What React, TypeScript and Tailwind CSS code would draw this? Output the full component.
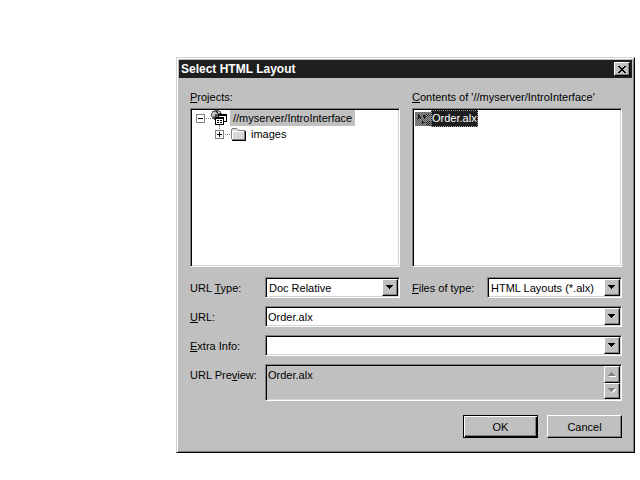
import type { ReactNode } from "react";

const sunken =
  "border border-t-[#808080] border-l-[#808080] border-r-white border-b-white shadow-[inset_1px_1px_0_#000,inset_-1px_-1px_0_#d4d4d4] p-px";
const raised =
  "border border-t-white border-l-white border-r-black border-b-black bg-[#c0c0c0] shadow-[inset_-1px_-1px_0_#808080]";

function Arrow({ up = false, disabled = false }: { up?: boolean; disabled?: boolean }) {
  const d = up ? "M3 0h1v1h1v1h1v1h1v1H0V3h1V2h1V1h1z" : "M0 0h7v1H6v1H5v1H4v1H3V3H2V2H1V1H0z";
  return (
    <svg width="8" height="5" viewBox="0 0 8 5" shapeRendering="crispEdges" aria-hidden="true">
      {disabled && <path d={d} fill="#fff" transform="translate(1 1)" />}
      <path d={d} fill={disabled ? "#808080" : "#000"} />
    </svg>
  );
}

function DropDown({ id, value }: { id: string; value: string }) {
  return (
    <div className={`relative flex h-[21px] min-w-0 flex-1 bg-white ${sunken}`}>
      <select id={id} className="w-full appearance-none bg-transparent pr-4 pl-0.5 outline-none">
        <option>{value}</option>
      </select>
      <span className={`pointer-events-none absolute inset-y-px right-px flex w-4 items-center justify-center ${raised}`}>
        <Arrow />
      </span>
    </div>
  );
}

function Combo({ id, value }: { id: string; value: string }) {
  return (
    <div className={`flex h-[21px] min-w-0 flex-1 bg-white ${sunken}`}>
      <input id={id} defaultValue={value} className="min-w-0 flex-1 bg-transparent pl-px outline-none" />
      <button type="button" aria-label="Show list" className={`flex w-4 items-center justify-center ${raised}`}>
        <Arrow />
      </button>
    </div>
  );
}

function Field({ id, label, children }: { id: string; label: ReactNode; children: ReactNode }) {
  return (
    <div className="flex items-start">
      <label htmlFor={id} className="w-[75px] shrink-0 pt-1">
        {label}
      </label>
      {children}
    </div>
  );
}

function ExpandBox({ open }: { open: boolean }) {
  return (
    <g>
      <rect x="4.5" y="4.5" width="8" height="8" fill="#fff" stroke="#808080" />
      <path d="M6 8h5v1H6z" />
      {!open && <path d="M8 6h1v5H8z" />}
      <path d="M14 8.5h6" stroke="#808080" strokeDasharray="1 1" />
    </g>
  );
}

function ServerIcon() {
  return (
    <svg width="36" height="16" viewBox="0 0 36 16" shapeRendering="crispEdges" aria-hidden="true">
      <ExpandBox open />
      <path d="M22 0h5v1h2v2h1v5h-1v2h-7V9h-2V7h-1V3h1V1h2z" fill="#686868" />
      <path d="M21 2h3v1h1v1h-2v2h-2v1h-1V3h1zM26 1h1v1h1v1h-2z" fill="#c4c4c4" />
      <path d="M24 1h2v2h-1V2h-1zM28 3h1v2h-1zM23 5h2v1h-2zM21 8h2v1h-2z" fill="#282828" />
      <path d="M26 4h9v8h-9z" />
      <path d="M27 6h7v5h-7z" fill="#fff" />
      <path d="M23 7h9v8h-9z" />
      <path d="M24 9h7v5h-7z" fill="#fff" />
      <path d="M25 10h2v1h-2zM28 10h2v1h-2zM25 12h2v1h-2zM28 12h2v1h-2z" />
      <path d="M27.5 15v1" stroke="#808080" />
    </svg>
  );
}

function FolderIcon() {
  return (
    <svg width="36" height="16" viewBox="0 0 36 16" shapeRendering="crispEdges" aria-hidden="true">
      <path d="M8.5 0v4" stroke="#808080" strokeDasharray="1 1" />
      <ExpandBox open={false} />
      <path d="M21 2h5v1h1v1h7v10H21v-1h-1V3h1z" fill="#808080" />
      <path d="M21 3h5v1h1v1h6v8H21z" fill="#d8d8d8" />
      <path d="M21 5h12v1H22v7h-1z" fill="#fff" />
      <path d="M34 5h1v10H21v-1h13z" />
    </svg>
  );
}

function LayoutIcon() {
  return (
    <svg width="16" height="16" viewBox="0 0 16 16" shapeRendering="crispEdges" aria-hidden="true">
      <defs>
        <pattern id="dither" width="2" height="2" patternUnits="userSpaceOnUse">
          <path d="M0 0h1v1H0zM1 1h1v1H1z" fill="#202020" />
        </pattern>
      </defs>
      <path d="M0 1h16v14H0z" fill="#8c8c8c" />
      <path d="M0 1h16v14H0z" fill="url(#dither)" opacity="0.4" />
      <path d="M3 3h1v1h1v2h1v2H5V7H4v1H2V7h1zM8 4h2v1h1v2h-1v1H9V6H8zM7 10h1v1h2v1H8v1H7z" fill="#202020" />
      <path d="M11 3h4v2h-4zM11 10h5v5h-5z" fill="url(#dither)" />
    </svg>
  );
}

export default function App() {
  return (
    <main className="min-h-screen bg-white pt-[57px] pr-[5px] pl-44 font-['Liberation_Sans',Arial,sans-serif] text-[11px] leading-[14px] text-black">
      <section
        role="dialog"
        aria-labelledby="dialog-title"
        className="border border-t-[#d4d4d4] border-r-black border-b-black border-l-[#d4d4d4] bg-[#c0c0c0] p-0.5 shadow-[inset_1px_1px_0_#fff,inset_-1px_-1px_0_#808080]"
      >
        <header className="flex h-[18px] items-center justify-between bg-[#1e1e1e] pr-0.5 pl-0.5 text-white">
          <h1 id="dialog-title" className="text-[12px] font-bold">
            Select HTML Layout
          </h1>
          <button type="button" aria-label="Close" className={`flex h-3.5 w-4 items-center justify-center ${raised}`}>
            <svg width="8" height="7" viewBox="0 0 8 7" shapeRendering="crispEdges" aria-hidden="true">
              <path d="M0 0h2v1h1v1h2V1h1V0h2v1H7v1H6v1H5v1h1v1h1v1h1v1H6V6H5V5H3v1H2v1H0V6h1V5h1V4h1V3H2V2H1V1H0z" fill="#000" />
            </svg>
          </button>
        </header>

        <form className="pt-3 pr-2.5 pb-3 pl-[11px]" onSubmit={(e) => e.preventDefault()}>
          <div className="grid grid-cols-2 gap-x-3">
            <div>
              <h2 id="projects" className="mb-1">
                <u>P</u>rojects:
              </h2>
              <ul role="tree" aria-labelledby="projects" className={`h-[159px] bg-white ${sunken}`}>
                <li role="treeitem" aria-expanded="true" aria-selected="true">
                  <div className="flex h-4 items-center gap-0.5">
                    <ServerIcon />
                    <span className="bg-[#c0c0c0] px-[3px] leading-4">//myserver/IntroInterface</span>
                  </div>
                  <ul role="group" className="pl-[19px]">
                    <li role="treeitem" aria-expanded="false" aria-selected="false" className="flex h-4 items-center gap-0.5">
                      <FolderIcon />
                      <span className="px-0.5 leading-4">images</span>
                    </li>
                  </ul>
                </li>
              </ul>
            </div>
            <div>
              <h2 id="contents" className="mb-1">
                <u>C</u>ontents of '//myserver/IntroInterface'
              </h2>
              <ul role="listbox" aria-labelledby="contents" className={`h-[159px] bg-white ${sunken}`}>
                <li role="option" aria-selected="true" className="flex h-[17px] items-center pl-px">
                  <LayoutIcon />
                  <span className="border border-dotted border-[#a0a0a0] bg-[#1e1e1e] leading-[15px] text-white">Order.alx</span>
                </li>
              </ul>
            </div>
          </div>

          <div className="mt-2.5 flex flex-col gap-2">
            <div className="grid grid-cols-2 gap-x-3">
              <Field id="url-type" label={<>URL <u>T</u>ype:</>}>
                <DropDown id="url-type" value="Doc Relative" />
              </Field>
              <Field id="file-type" label={<><u>F</u>iles of type:</>}>
                <DropDown id="file-type" value="HTML Layouts (*.alx)" />
              </Field>
            </div>
            <Field id="url" label={<><u>U</u>RL:</>}>
              <Combo id="url" value="Order.alx" />
            </Field>
            <Field id="extra" label={<><u>E</u>xtra Info:</>}>
              <Combo id="extra" value="" />
            </Field>
            <Field id="preview" label={<>URL Pre<u>v</u>iew:</>}>
              <div className={`flex h-[37px] min-w-0 flex-1 ${sunken}`}>
                <textarea
                  id="preview"
                  readOnly
                  defaultValue="Order.alx"
                  className="min-w-0 flex-1 resize-none overflow-hidden bg-transparent pt-0.5 pl-px outline-none"
                />
                <div className="flex w-4 flex-col">
                  <button type="button" disabled aria-label="Scroll up" className={`flex flex-1 items-center justify-center ${raised}`}>
                    <Arrow up disabled />
                  </button>
                  <button type="button" disabled aria-label="Scroll down" className={`flex flex-1 items-center justify-center ${raised}`}>
                    <Arrow disabled />
                  </button>
                </div>
              </div>
            </Field>
          </div>

          <div className="mt-3.5 flex justify-end gap-[9px]">
            <button type="submit" className="h-[23px] w-[75px] border border-black bg-[#c0c0c0] shadow-[inset_1px_1px_0_#fff,inset_-1px_-1px_0_#000,inset_-2px_-2px_0_#808080]">
              OK
            </button>
            <button type="button" className={`h-[23px] w-[75px] ${raised}`}>
              Cancel
            </button>
          </div>
        </form>
      </section>
    </main>
  );
}
